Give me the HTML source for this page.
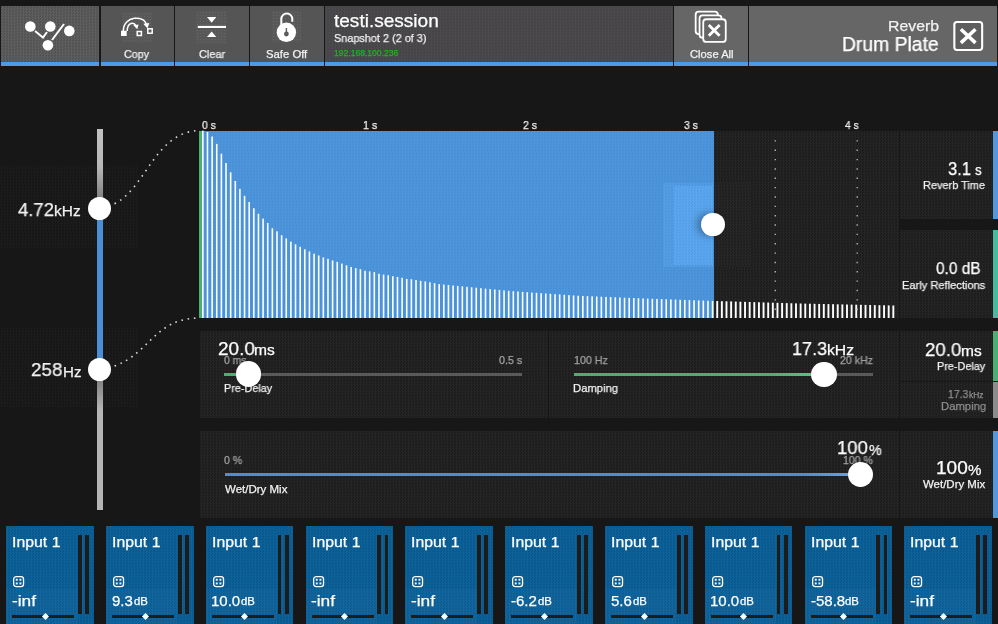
<!DOCTYPE html><html><head><meta charset="utf-8"><style>
html,body{margin:0;padding:0;width:998px;height:624px;overflow:hidden;background:#171717;}
body{position:relative;font-family:"Liberation Sans", sans-serif;}
.t{position:absolute;white-space:nowrap;line-height:1;transform-origin:0 0;will-change:transform;-webkit-text-stroke:0.25px currentColor;}
</style></head><body>
<div style="position:absolute;left:1.00px;top:6.00px;width:98.00px;height:56.00px;background:#585858;background-image:repeating-conic-gradient(#5e5e5e 0 25%,#525252 0 50%);background-size:3px 3px;"></div><div style="position:absolute;left:1.00px;top:62.00px;width:98.00px;height:4.00px;background:#4d9ae6;"></div><div style="position:absolute;left:100.50px;top:6.00px;width:73.00px;height:56.00px;background:#555555;"></div><div style="position:absolute;left:100.50px;top:62.00px;width:73.00px;height:4.00px;background:#4d9ae6;"></div><div style="position:absolute;left:175.00px;top:6.00px;width:73.70px;height:56.00px;background:#555555;"></div><div style="position:absolute;left:175.00px;top:62.00px;width:73.70px;height:4.00px;background:#4d9ae6;"></div><div style="position:absolute;left:250.20px;top:6.00px;width:73.60px;height:56.00px;background:#555555;"></div><div style="position:absolute;left:250.20px;top:62.00px;width:73.60px;height:4.00px;background:#4d9ae6;"></div><div style="position:absolute;left:325.00px;top:6.00px;width:348.00px;height:56.00px;background:#484848;background-image:repeating-conic-gradient(#4c4a4e 0 25%,#444444 0 50%);background-size:3px 3px;"></div><div style="position:absolute;left:325.00px;top:62.00px;width:348.00px;height:4.00px;background:#4d9ae6;"></div><div style="position:absolute;left:674.40px;top:6.00px;width:73.60px;height:56.00px;background:#666666;"></div><div style="position:absolute;left:674.40px;top:62.00px;width:73.60px;height:4.00px;background:#4d9ae6;"></div><div style="position:absolute;left:749.00px;top:6.00px;width:248.00px;height:56.00px;background:#666666;"></div><div style="position:absolute;left:749.00px;top:62.00px;width:248.00px;height:4.00px;background:#4d9ae6;"></div><div style="position:absolute;left:121.50px;top:12.20px;width:30.30px;height:30.40px;background:#585858;background-image:radial-gradient(circle,#666 0.6px,transparent 0.9px);background-size:3px 3px;"></div><div style="position:absolute;left:196.10px;top:10.60px;width:31.10px;height:32.70px;background:#585858;background-image:radial-gradient(circle,#666 0.6px,transparent 0.9px);background-size:3px 3px;"></div><div style="position:absolute;left:271.50px;top:11.20px;width:29.90px;height:31.20px;background:#585858;background-image:radial-gradient(circle,#666 0.6px,transparent 0.9px);background-size:3px 3px;"></div><div class="t" style="left:124.46px;top:49.02px;font-size:11.20px;color:#f2f2f2;transform:scaleX(0.9623)">Copy</div><div class="t" style="left:198.85px;top:49.02px;font-size:11.20px;color:#f2f2f2;transform:scaleX(0.9793)">Clear</div><div class="t" style="left:265.89px;top:49.02px;font-size:11.20px;color:#f2f2f2;transform:scaleX(1.0098)">Safe Off</div><div class="t" style="left:689.54px;top:49.12px;font-size:11.20px;color:#f2f2f2;transform:scaleX(1.0011)">Close All</div><div class="t" style="left:334.11px;top:11.65px;font-size:18.60px;color:#ffffff;transform:scaleX(1.0237)">testi.session</div><div class="t" style="left:333.51px;top:32.48px;font-size:11.60px;color:#f2f2f2;transform:scaleX(0.9380)">Snapshot 2 (2 of 3)</div><div class="t" style="left:333.96px;top:48.87px;font-size:8.30px;color:#1fb51f;transform:scaleX(1.0304)">192.168.100.236</div><div class="t" style="left:887.89px;top:18.10px;font-size:15.00px;color:#f2f2f2;transform:scaleX(1.0559)">Reverb</div><div class="t" style="left:841.91px;top:35.05px;font-size:19.90px;color:#ffffff;transform:scaleX(0.9710)">Drum Plate</div><svg style="position:absolute;left:0;top:0" width="998" height="70">
<g fill="#fff"><circle cx="30.3" cy="26.5" r="5.3"/><circle cx="50.3" cy="26.5" r="5.3"/><circle cx="69.3" cy="30.9" r="5.3"/><circle cx="47.9" cy="45.3" r="5.3"/></g>
<g stroke="#fff" stroke-width="2" fill="none"><polyline points="35,31 43,37.5 47,32"/><line x1="52" y1="40" x2="64" y2="24"/></g>
<g fill="#fff"><rect x="121" y="30.7" width="5.7" height="5.3"/></g>
<g stroke="#fff" stroke-width="1.5" fill="none"><rect x="137.2" y="31.5" width="4.2" height="4"/><rect x="147.8" y="28.8" width="4.4" height="4.4"/>
<path d="M123.3,31 C123.3,15.2 145,15.2 146.3,24.5"/><path d="M127.2,31 C127.2,21.8 134.8,21.8 135.9,26"/></g>
<g fill="#fff"><path d="M143.3,23.8 L149.3,23 L147.5,28.6 Z"/><path d="M133.3,25.3 L138.5,24.6 L137.3,29.2 Z"/></g>
<g fill="#fff"><path d="M207,17 L216.3,17 L211.65,22.8 Z"/><rect x="197.8" y="25.9" width="28.2" height="2.1"/><path d="M207,36.9 L216.3,36.9 L211.65,31.6 Z"/></g>
<g><circle cx="286.4" cy="32.3" r="9.7" fill="#fff"/><path d="M281.3,26 L281.3,19 A5.5,5.5 0 0 1 292.3,19 L292.3,21.7" stroke="#fff" stroke-width="2" fill="none"/>
<circle cx="286.4" cy="34" r="2.4" fill="#5b5b5b"/><rect x="285.7" y="28" width="1.4" height="5" fill="#5b5b5b"/></g>
<g fill="#666" stroke="#fff" stroke-width="1.8"><rect x="695.65" y="11.65" width="22.2" height="22.4" rx="3"/><rect x="699.55" y="15.45" width="22" height="22.2" rx="3"/><rect x="703.25" y="19.25" width="22.5" height="22.7" rx="3"/></g>
<g stroke="#fff" stroke-width="2.8"><line x1="708.8" y1="24.9" x2="719.6" y2="35.8"/><line x1="719.6" y1="24.9" x2="708.8" y2="35.8"/></g>
<rect x="954.35" y="21.95" width="27.8" height="28" rx="2.6" fill="#5e5e5e" stroke="#fff" stroke-width="2.1"/>
<g stroke="#fff" stroke-width="3.5"><line x1="960.9" y1="29.2" x2="975.5" y2="42.9"/><line x1="975.5" y1="29.2" x2="960.9" y2="42.9"/></g>
</svg><div style="position:absolute;left:0.00px;top:166.30px;width:138.50px;height:82.70px;background:#191919;background-image:repeating-conic-gradient(#1c1c1c 0 25%,#161616 0 50%);background-size:3px 3px;"></div><div style="position:absolute;left:0.00px;top:327.50px;width:138.50px;height:79.50px;background:#191919;background-image:repeating-conic-gradient(#1c1c1c 0 25%,#161616 0 50%);background-size:3px 3px;"></div><div style="position:absolute;left:97.00px;top:128.75px;width:6.00px;height:381.00px;background:linear-gradient(#c2c2c2 0px,#b8b8b8 38px,#7c7c7c 72px,#777 80px,#777 241px,#7e7e7e 250px,#b5b5b5 281px,#b5b5b5 381px);"></div><div style="position:absolute;left:97.00px;top:209.00px;width:6.00px;height:160.00px;background:#4a8fd6;"></div><svg style="position:absolute;left:0;top:100px" width="220" height="300">
<path d="M114.5,103.8 C146.2,88 155.1,31.6 199.5,30.5" stroke="#d8d8d8" stroke-width="1.6" stroke-dasharray="1.6 4.9" fill="none"/>
<path d="M114.5,266 C150.1,253.4 154.6,218.1 199.5,218" stroke="#d8d8d8" stroke-width="1.6" stroke-dasharray="1.6 4.7" fill="none"/>
</svg><div style="position:absolute;left:88.20px;top:197.00px;width:23.20px;height:23.20px;border-radius:50%;background:#fff;"></div><div style="position:absolute;left:88.20px;top:357.90px;width:23.20px;height:23.20px;border-radius:50%;background:#fff;"></div><div class="t" style="left:18.28px;top:199.91px;font-size:19.00px;color:#f0f0f0;transform:scaleX(0.9725)">4.72</div><div class="t" style="left:54.26px;top:203.30px;font-size:15.00px;color:#f0f0f0;transform:scaleX(1.0301)">kHz</div><div class="t" style="left:30.56px;top:360.21px;font-size:19.00px;color:#f0f0f0;transform:scaleX(0.9891)">258</div><div class="t" style="left:63.25px;top:363.60px;font-size:15.00px;color:#f0f0f0;transform:scaleX(1.0092)">Hz</div><div style="position:absolute;left:199.50px;top:130.50px;width:699.50px;height:187.50px;background:#212121;background-image:repeating-conic-gradient(#252525 0 25%,#1c1c1c 0 50%);background-size:3px 3px;"></div><div style="position:absolute;left:199.50px;top:130.50px;width:514.00px;height:187.50px;background:#4b91d9;background-image:repeating-conic-gradient(#4e95dc 0 25%,#4890d6 0 50%);background-size:3px 3px;"></div><div style="position:absolute;left:713.50px;top:183.20px;width:36.00px;height:84.00px;background:#232323;background-image:repeating-conic-gradient(#272727 0 25%,#1e1e1e 0 50%);background-size:3px 3px;"></div><div style="position:absolute;left:663.20px;top:183.20px;width:50.30px;height:84.00px;background:#519be2;background-image:repeating-conic-gradient(#549ee5 0 25%,#4e97df 0 50%);background-size:3px 3px;"></div><div style="position:absolute;left:673.80px;top:186.00px;width:39.70px;height:79.00px;background:#57a2ea;background-image:repeating-conic-gradient(#5ba6ee 0 25%,#539ee6 0 50%);background-size:3px 3px;"></div><div style="position:absolute;left:199.30px;top:130.50px;width:2.40px;height:187.50px;background:#4caf72;"></div><svg style="position:absolute;left:0;top:0" width="998" height="330"><rect x="202.05" y="130.60" width="1.6" height="187.40" fill="#fff"/><rect x="206.68" y="132.00" width="1.6" height="186.00" fill="#fff"/><rect x="211.32" y="136.53" width="1.6" height="181.47" fill="#fff"/><rect x="215.95" y="143.92" width="1.6" height="174.08" fill="#fff"/><rect x="220.59" y="153.67" width="1.6" height="164.33" fill="#fff"/><rect x="225.22" y="163.04" width="1.6" height="154.96" fill="#fff"/><rect x="229.85" y="172.31" width="1.6" height="145.69" fill="#fff"/><rect x="234.49" y="180.98" width="1.6" height="137.02" fill="#fff"/><rect x="239.12" y="188.87" width="1.6" height="129.13" fill="#fff"/><rect x="243.76" y="195.83" width="1.6" height="122.17" fill="#fff"/><rect x="248.39" y="201.99" width="1.6" height="116.01" fill="#fff"/><rect x="253.02" y="208.23" width="1.6" height="109.77" fill="#fff"/><rect x="257.66" y="213.75" width="1.6" height="104.25" fill="#fff"/><rect x="262.29" y="218.59" width="1.6" height="99.41" fill="#fff"/><rect x="266.93" y="223.03" width="1.6" height="94.97" fill="#fff"/><rect x="271.56" y="228.24" width="1.6" height="89.76" fill="#fff"/><rect x="276.19" y="231.30" width="1.6" height="86.70" fill="#fff"/><rect x="280.83" y="235.19" width="1.6" height="82.81" fill="#fff"/><rect x="285.46" y="238.38" width="1.6" height="79.62" fill="#fff"/><rect x="290.10" y="241.61" width="1.6" height="76.39" fill="#fff"/><rect x="294.73" y="244.23" width="1.6" height="73.77" fill="#fff"/><rect x="299.36" y="246.79" width="1.6" height="71.21" fill="#fff"/><rect x="304.00" y="249.33" width="1.6" height="68.67" fill="#fff"/><rect x="308.63" y="251.42" width="1.6" height="66.58" fill="#fff"/><rect x="313.27" y="253.70" width="1.6" height="64.30" fill="#fff"/><rect x="317.90" y="255.49" width="1.6" height="62.51" fill="#fff"/><rect x="322.53" y="257.49" width="1.6" height="60.51" fill="#fff"/><rect x="327.17" y="258.79" width="1.6" height="59.21" fill="#fff"/><rect x="331.80" y="260.46" width="1.6" height="57.54" fill="#fff"/><rect x="336.44" y="261.89" width="1.6" height="56.11" fill="#fff"/><rect x="341.07" y="263.60" width="1.6" height="54.40" fill="#fff"/><rect x="345.70" y="265.35" width="1.6" height="52.65" fill="#fff"/><rect x="350.34" y="267.01" width="1.6" height="50.99" fill="#fff"/><rect x="354.97" y="268.16" width="1.6" height="49.84" fill="#fff"/><rect x="359.61" y="269.21" width="1.6" height="48.79" fill="#fff"/><rect x="364.24" y="270.82" width="1.6" height="47.18" fill="#fff"/><rect x="368.87" y="271.41" width="1.6" height="46.59" fill="#fff"/><rect x="373.51" y="272.17" width="1.6" height="45.83" fill="#fff"/><rect x="378.14" y="273.73" width="1.6" height="44.27" fill="#fff"/><rect x="382.78" y="274.61" width="1.6" height="43.39" fill="#fff"/><rect x="387.41" y="275.13" width="1.6" height="42.87" fill="#fff"/><rect x="392.04" y="276.21" width="1.6" height="41.79" fill="#fff"/><rect x="396.68" y="276.98" width="1.6" height="41.02" fill="#fff"/><rect x="401.31" y="277.78" width="1.6" height="40.22" fill="#fff"/><rect x="405.95" y="278.99" width="1.6" height="39.01" fill="#fff"/><rect x="410.58" y="279.20" width="1.6" height="38.80" fill="#fff"/><rect x="415.21" y="279.99" width="1.6" height="38.01" fill="#fff"/><rect x="419.85" y="280.84" width="1.6" height="37.16" fill="#fff"/><rect x="424.48" y="281.45" width="1.6" height="36.55" fill="#fff"/><rect x="429.12" y="282.26" width="1.6" height="35.74" fill="#fff"/><rect x="433.75" y="283.17" width="1.6" height="34.83" fill="#fff"/><rect x="438.38" y="284.12" width="1.6" height="33.88" fill="#fff"/><rect x="443.02" y="284.57" width="1.6" height="33.43" fill="#fff"/><rect x="447.65" y="285.02" width="1.6" height="32.98" fill="#fff"/><rect x="452.29" y="285.47" width="1.6" height="32.53" fill="#fff"/><rect x="456.92" y="285.92" width="1.6" height="32.08" fill="#fff"/><rect x="461.55" y="286.37" width="1.6" height="31.63" fill="#fff"/><rect x="466.19" y="286.82" width="1.6" height="31.18" fill="#fff"/><rect x="470.82" y="287.27" width="1.6" height="30.73" fill="#fff"/><rect x="475.46" y="287.72" width="1.6" height="30.28" fill="#fff"/><rect x="480.09" y="288.17" width="1.6" height="29.83" fill="#fff"/><rect x="484.72" y="288.62" width="1.6" height="29.38" fill="#fff"/><rect x="489.36" y="289.07" width="1.6" height="28.93" fill="#fff"/><rect x="493.99" y="289.52" width="1.6" height="28.48" fill="#fff"/><rect x="498.63" y="289.97" width="1.6" height="28.03" fill="#fff"/><rect x="503.26" y="290.42" width="1.6" height="27.58" fill="#fff"/><rect x="507.89" y="290.87" width="1.6" height="27.13" fill="#fff"/><rect x="512.53" y="291.23" width="1.6" height="26.77" fill="#fff"/><rect x="517.16" y="291.55" width="1.6" height="26.45" fill="#fff"/><rect x="521.80" y="291.88" width="1.6" height="26.12" fill="#fff"/><rect x="526.43" y="292.20" width="1.6" height="25.80" fill="#fff"/><rect x="531.06" y="292.52" width="1.6" height="25.48" fill="#fff"/><rect x="535.70" y="292.84" width="1.6" height="25.16" fill="#fff"/><rect x="540.33" y="293.17" width="1.6" height="24.83" fill="#fff"/><rect x="544.97" y="293.49" width="1.6" height="24.51" fill="#fff"/><rect x="549.60" y="293.81" width="1.6" height="24.19" fill="#fff"/><rect x="554.23" y="294.13" width="1.6" height="23.87" fill="#fff"/><rect x="558.87" y="294.46" width="1.6" height="23.54" fill="#fff"/><rect x="563.50" y="294.78" width="1.6" height="23.22" fill="#fff"/><rect x="568.14" y="295.10" width="1.6" height="22.90" fill="#fff"/><rect x="572.77" y="295.42" width="1.6" height="22.58" fill="#fff"/><rect x="577.40" y="295.74" width="1.6" height="22.26" fill="#fff"/><rect x="582.04" y="295.96" width="1.6" height="22.04" fill="#fff"/><rect x="586.67" y="296.15" width="1.6" height="21.85" fill="#fff"/><rect x="591.31" y="296.34" width="1.6" height="21.66" fill="#fff"/><rect x="595.94" y="296.53" width="1.6" height="21.47" fill="#fff"/><rect x="600.57" y="296.72" width="1.6" height="21.28" fill="#fff"/><rect x="605.21" y="296.90" width="1.6" height="21.10" fill="#fff"/><rect x="609.84" y="297.09" width="1.6" height="20.91" fill="#fff"/><rect x="614.48" y="297.28" width="1.6" height="20.72" fill="#fff"/><rect x="619.11" y="297.47" width="1.6" height="20.53" fill="#fff"/><rect x="623.74" y="297.66" width="1.6" height="20.34" fill="#fff"/><rect x="628.38" y="297.85" width="1.6" height="20.15" fill="#fff"/><rect x="633.01" y="298.04" width="1.6" height="19.96" fill="#fff"/><rect x="637.65" y="298.23" width="1.6" height="19.77" fill="#fff"/><rect x="642.28" y="298.42" width="1.6" height="19.58" fill="#fff"/><rect x="646.91" y="298.60" width="1.6" height="19.40" fill="#fff"/><rect x="651.55" y="298.76" width="1.6" height="19.24" fill="#fff"/><rect x="656.18" y="298.93" width="1.6" height="19.07" fill="#fff"/><rect x="660.82" y="299.09" width="1.6" height="18.91" fill="#fff"/><rect x="665.45" y="299.26" width="1.6" height="18.74" fill="#fff"/><rect x="670.08" y="299.42" width="1.6" height="18.58" fill="#fff"/><rect x="674.72" y="299.59" width="1.6" height="18.41" fill="#fff"/><rect x="679.35" y="299.75" width="1.6" height="18.25" fill="#fff"/><rect x="683.99" y="299.91" width="1.6" height="18.09" fill="#fff"/><rect x="688.62" y="300.08" width="1.6" height="17.92" fill="#fff"/><rect x="693.25" y="300.24" width="1.6" height="17.76" fill="#fff"/><rect x="697.89" y="300.41" width="1.6" height="17.59" fill="#fff"/><rect x="702.52" y="300.57" width="1.6" height="17.43" fill="#fff"/><rect x="707.16" y="300.74" width="1.6" height="17.26" fill="#fff"/><rect x="711.79" y="300.90" width="1.6" height="17.10" fill="#fff"/><rect x="716.27" y="301.04" width="1.9" height="16.96" fill="#fff"/><rect x="720.91" y="301.18" width="1.9" height="16.82" fill="#fff"/><rect x="725.54" y="301.32" width="1.9" height="16.68" fill="#fff"/><rect x="730.18" y="301.45" width="1.9" height="16.55" fill="#fff"/><rect x="734.81" y="301.59" width="1.9" height="16.41" fill="#fff"/><rect x="739.44" y="301.73" width="1.9" height="16.27" fill="#fff"/><rect x="744.08" y="301.87" width="1.9" height="16.13" fill="#fff"/><rect x="748.71" y="302.00" width="1.9" height="16.00" fill="#fff"/><rect x="753.35" y="302.14" width="1.9" height="15.86" fill="#fff"/><rect x="757.98" y="302.28" width="1.9" height="15.72" fill="#fff"/><rect x="762.61" y="302.42" width="1.9" height="15.58" fill="#fff"/><rect x="767.25" y="302.56" width="1.9" height="15.44" fill="#fff"/><rect x="771.88" y="302.69" width="1.9" height="15.31" fill="#fff"/><rect x="776.52" y="302.83" width="1.9" height="15.17" fill="#fff"/><rect x="781.15" y="302.97" width="1.9" height="15.03" fill="#fff"/><rect x="785.78" y="303.11" width="1.9" height="14.89" fill="#fff"/><rect x="790.42" y="303.24" width="1.9" height="14.76" fill="#fff"/><rect x="795.05" y="303.38" width="1.9" height="14.62" fill="#fff"/><rect x="799.69" y="303.51" width="1.9" height="14.49" fill="#fff"/><rect x="804.32" y="303.61" width="1.9" height="14.39" fill="#fff"/><rect x="808.95" y="303.71" width="1.9" height="14.29" fill="#fff"/><rect x="813.59" y="303.81" width="1.9" height="14.19" fill="#fff"/><rect x="818.22" y="303.91" width="1.9" height="14.09" fill="#fff"/><rect x="822.86" y="304.01" width="1.9" height="13.99" fill="#fff"/><rect x="827.49" y="304.11" width="1.9" height="13.89" fill="#fff"/><rect x="832.12" y="304.21" width="1.9" height="13.79" fill="#fff"/><rect x="836.76" y="304.31" width="1.9" height="13.69" fill="#fff"/><rect x="841.39" y="304.41" width="1.9" height="13.59" fill="#fff"/><rect x="846.03" y="304.51" width="1.9" height="13.49" fill="#fff"/><rect x="850.66" y="304.61" width="1.9" height="13.39" fill="#fff"/><rect x="855.29" y="304.70" width="1.9" height="13.30" fill="#fff"/><rect x="859.93" y="304.80" width="1.9" height="13.20" fill="#fff"/><rect x="864.56" y="304.90" width="1.9" height="13.10" fill="#fff"/><rect x="869.20" y="305.00" width="1.9" height="13.00" fill="#fff"/><rect x="873.83" y="305.10" width="1.9" height="12.90" fill="#fff"/><rect x="878.46" y="305.20" width="1.9" height="12.80" fill="#fff"/><rect x="883.10" y="305.30" width="1.9" height="12.70" fill="#fff"/><rect x="887.73" y="305.40" width="1.9" height="12.60" fill="#fff"/><rect x="892.37" y="305.50" width="1.9" height="12.50" fill="#fff"/><line x1="775.3" y1="140.2" x2="775.3" y2="318" stroke="#b0b0b0" stroke-width="1.4" stroke-dasharray="1.4 7.95"/><line x1="857.2" y1="140.2" x2="857.2" y2="318" stroke="#b0b0b0" stroke-width="1.4" stroke-dasharray="1.4 7.95"/></svg><div style="position:absolute;left:701.10px;top:212.80px;width:23.60px;height:23.60px;border-radius:50%;background:#fff;box-shadow:-4px 0 7px rgba(0,0,0,0.3)"></div><div class="t" style="left:202.38px;top:119.56px;font-size:11.50px;color:#f0f0f0;transform:scaleX(0.9110)">0 s</div><div class="t" style="left:362.54px;top:119.56px;font-size:11.50px;color:#f0f0f0;transform:scaleX(0.9370)">1 s</div><div class="t" style="left:523.37px;top:119.56px;font-size:11.50px;color:#f0f0f0;transform:scaleX(0.9183)">2 s</div><div class="t" style="left:684.06px;top:119.56px;font-size:11.50px;color:#f0f0f0;transform:scaleX(0.9092)">3 s</div><div class="t" style="left:844.77px;top:119.56px;font-size:11.50px;color:#f0f0f0;transform:scaleX(0.8985)">4 s</div><div style="position:absolute;left:900.00px;top:130.90px;width:93.00px;height:87.80px;background:#212121;background-image:repeating-conic-gradient(#252525 0 25%,#1c1c1c 0 50%);background-size:3px 3px;"></div><div style="position:absolute;left:993.00px;top:130.90px;width:5.00px;height:87.80px;background:#5398dc;"></div><div style="position:absolute;left:900.00px;top:230.30px;width:93.00px;height:87.30px;background:#212121;background-image:repeating-conic-gradient(#252525 0 25%,#1c1c1c 0 50%);background-size:3px 3px;"></div><div style="position:absolute;left:993.00px;top:230.30px;width:5.00px;height:87.30px;background:#4db8a0;"></div><div style="position:absolute;left:900.00px;top:330.70px;width:93.00px;height:50.30px;background:#212121;background-image:repeating-conic-gradient(#252525 0 25%,#1c1c1c 0 50%);background-size:3px 3px;"></div><div style="position:absolute;left:993.00px;top:330.70px;width:5.00px;height:50.30px;background:#4caf72;"></div><div style="position:absolute;left:900.00px;top:382.30px;width:93.00px;height:35.50px;background:#212121;background-image:repeating-conic-gradient(#252525 0 25%,#1c1c1c 0 50%);background-size:3px 3px;"></div><div style="position:absolute;left:993.00px;top:382.30px;width:5.00px;height:35.50px;background:#8c8c8c;"></div><div style="position:absolute;left:900.00px;top:431.00px;width:93.00px;height:86.60px;background:#212121;background-image:repeating-conic-gradient(#252525 0 25%,#1c1c1c 0 50%);background-size:3px 3px;"></div><div style="position:absolute;left:993.00px;top:431.00px;width:5.00px;height:86.60px;background:#5398dc;"></div><div class="t" style="left:948.28px;top:158.91px;font-size:19.00px;color:#ffffff;transform:scaleX(0.8711)">3.1</div><div class="t" style="left:974.73px;top:161.88px;font-size:15.50px;color:#ffffff;transform:scaleX(0.8700)">s</div><div class="t" style="left:923.30px;top:180.03px;font-size:11.30px;color:#f2f2f2;transform:scaleX(0.9692)">Reverb Time</div><div class="t" style="left:936.08px;top:261.28px;font-size:16.80px;color:#ffffff;transform:scaleX(0.9205)">0.0 dB</div><div class="t" style="left:902.18px;top:279.93px;font-size:11.30px;color:#f2f2f2;transform:scaleX(0.9826)">Early Reflections</div><div class="t" style="left:924.97px;top:339.71px;font-size:19.00px;color:#ffffff;transform:scaleX(0.9804)">20.0</div><div class="t" style="left:961.17px;top:342.68px;font-size:15.50px;color:#ffffff;transform:scaleX(0.9861)">ms</div><div class="t" style="left:937.20px;top:361.43px;font-size:11.30px;color:#f2f2f2;transform:scaleX(0.9621)">Pre-Delay</div><div class="t" style="left:947.82px;top:388.82px;font-size:10.60px;color:#8e8e8e;transform:scaleX(0.9808)">17.3</div><div class="t" style="left:968.93px;top:390.77px;font-size:8.30px;color:#8e8e8e;transform:scaleX(1.0134)">kHz</div><div class="t" style="left:940.97px;top:401.33px;font-size:11.30px;color:#8e8e8e;transform:scaleX(0.9963)">Damping</div><div class="t" style="left:936.19px;top:458.11px;font-size:19.00px;color:#ffffff;transform:scaleX(0.9917)">100</div><div class="t" style="left:968.27px;top:461.80px;font-size:15.00px;color:#ffffff;transform:scaleX(1.0081)">%</div><div class="t" style="left:923.24px;top:479.23px;font-size:11.30px;color:#f2f2f2;transform:scaleX(1.0147)">Wet/Dry Mix</div><div style="position:absolute;left:199.70px;top:331.00px;width:699.30px;height:86.60px;background:#212121;background-image:repeating-conic-gradient(#252525 0 25%,#1c1c1c 0 50%);background-size:3px 3px;"></div><div style="position:absolute;left:548.00px;top:331.00px;width:1.20px;height:86.60px;background:#151515;"></div><div style="position:absolute;left:224.40px;top:373.00px;width:297.90px;height:3.00px;background:#5a5a5a;"></div><div style="position:absolute;left:224.40px;top:373.00px;width:24.00px;height:3.00px;background:#4caf72;"></div><div class="t" style="left:224.39px;top:355.16px;font-size:10.80px;color:#a2a2a2;transform:scaleX(0.9602)">0 ms</div><div class="t" style="left:499.47px;top:355.06px;font-size:10.80px;color:#a2a2a2;transform:scaleX(0.9912)">0.5 s</div><div class="t" style="left:223.80px;top:383.43px;font-size:11.30px;color:#f2f2f2;transform:scaleX(0.9601)">Pre-Delay</div><div style="position:absolute;left:235.50px;top:361.40px;width:25.40px;height:25.40px;border-radius:50%;background:#fff;"></div><div class="t" style="left:217.86px;top:338.81px;font-size:19.00px;color:#ffffff;transform:scaleX(0.9945)">20.0</div><div class="t" style="left:253.85px;top:341.78px;font-size:15.50px;color:#ffffff;transform:scaleX(1.0071)">ms</div><div style="position:absolute;left:573.90px;top:373.00px;width:298.90px;height:3.00px;background:#5a5a5a;"></div><div style="position:absolute;left:573.90px;top:373.00px;width:250.00px;height:3.00px;background:linear-gradient(90deg,#4caf72 0px,#4caf72 195px,#5cc486 245px);"></div><div class="t" style="left:573.80px;top:355.16px;font-size:10.80px;color:#a2a2a2;transform:scaleX(0.9891)">100 Hz</div><div class="t" style="left:840.17px;top:355.06px;font-size:10.80px;color:#a2a2a2;transform:scaleX(0.9805)">20 kHz</div><div class="t" style="left:573.47px;top:383.23px;font-size:11.30px;color:#f2f2f2;transform:scaleX(0.9940)">Damping</div><div style="position:absolute;left:811.20px;top:361.70px;width:25.40px;height:25.40px;border-radius:50%;background:#fff;"></div><div class="t" style="left:791.75px;top:338.91px;font-size:19.00px;color:#ffffff;transform:scaleX(0.9475)">17.3</div><div class="t" style="left:826.84px;top:342.40px;font-size:15.00px;color:#ffffff;transform:scaleX(1.0467)">kHz</div><div style="position:absolute;left:199.60px;top:431.00px;width:699.40px;height:86.60px;background:#212121;background-image:repeating-conic-gradient(#252525 0 25%,#1c1c1c 0 50%);background-size:3px 3px;"></div><div style="position:absolute;left:224.70px;top:473.00px;width:635.30px;height:3.00px;background:linear-gradient(90deg,#4a8fd6 0px,#4a8fd6 580px,#5ea7f0 630px);"></div><div class="t" style="left:224.28px;top:455.16px;font-size:10.80px;color:#a2a2a2;transform:scaleX(0.9764)">0 %</div><div class="t" style="left:843.41px;top:454.76px;font-size:10.80px;color:#a2a2a2;transform:scaleX(0.9743)">100 %</div><div class="t" style="left:224.64px;top:483.73px;font-size:11.30px;color:#f2f2f2;transform:scaleX(1.0179)">Wet/Dry Mix</div><div style="position:absolute;left:847.80px;top:461.50px;width:25.40px;height:25.40px;border-radius:50%;background:#fff;"></div><div class="t" style="left:836.62px;top:438.41px;font-size:19.00px;color:#ffffff;transform:scaleX(0.9714)">100</div><div class="t" style="left:868.80px;top:442.10px;font-size:15.00px;color:#ffffff;transform:scaleX(0.9512)">%</div><div style="position:absolute;left:6.10px;top:525.70px;width:87.70px;height:99.00px;background:#0b5c92;background-image:repeating-conic-gradient(#0c6397 0 25%,#0a568e 0 50%);background-size:3px 3px;"></div><div style="position:absolute;left:6.10px;top:589.00px;width:71.50px;height:35.00px;background:rgba(120,200,255,0.05);"></div><div style="position:absolute;left:78.00px;top:535.20px;width:3.90px;height:79.00px;background:#1c1c1c;"></div><div style="position:absolute;left:85.20px;top:535.20px;width:3.90px;height:79.00px;background:#1c1c1c;"></div><div style="position:absolute;left:12.20px;top:614.60px;width:62.10px;height:3.10px;background:#1c1c1c;"></div><div style="position:absolute;left:42.70px;top:613.60px;width:5px;height:5px;background:#fff;transform:rotate(45deg)"></div><div class="t" style="left:12.23px;top:534.33px;font-size:15.20px;color:#ffffff;transform:scaleX(1.0441)">Input 1</div><svg style="position:absolute;left:13.10px;top:576.0px" width="12" height="12"><rect x="0.65" y="0.65" width="9.9" height="9.9" rx="2.6" fill="none" stroke="#fff" stroke-width="1.3"/><g fill="#fff"><rect x="2.8" y="2.8" width="1.9" height="1.9"/><rect x="6.5" y="2.8" width="1.9" height="1.9"/><rect x="2.8" y="6.5" width="1.9" height="1.9"/><rect x="6.5" y="6.5" width="1.9" height="1.9"/></g></svg><div class="t" style="left:11.72px;top:592.50px;font-size:15.00px;color:#ffffff;transform:scaleX(1.1528)">-inf</div><div style="position:absolute;left:105.90px;top:525.70px;width:87.70px;height:99.00px;background:#0b5c92;background-image:repeating-conic-gradient(#0c6397 0 25%,#0a568e 0 50%);background-size:3px 3px;"></div><div style="position:absolute;left:105.90px;top:589.00px;width:71.50px;height:35.00px;background:rgba(120,200,255,0.05);"></div><div style="position:absolute;left:177.80px;top:535.20px;width:3.90px;height:79.00px;background:#1c1c1c;"></div><div style="position:absolute;left:185.00px;top:535.20px;width:3.90px;height:79.00px;background:#1c1c1c;"></div><div style="position:absolute;left:112.00px;top:614.60px;width:62.10px;height:3.10px;background:#1c1c1c;"></div><div style="position:absolute;left:142.50px;top:613.60px;width:5px;height:5px;background:#fff;transform:rotate(45deg)"></div><div class="t" style="left:112.03px;top:534.33px;font-size:15.20px;color:#ffffff;transform:scaleX(1.0441)">Input 1</div><svg style="position:absolute;left:112.90px;top:576.0px" width="12" height="12"><rect x="0.65" y="0.65" width="9.9" height="9.9" rx="2.6" fill="none" stroke="#fff" stroke-width="1.3"/><g fill="#fff"><rect x="2.8" y="2.8" width="1.9" height="1.9"/><rect x="6.5" y="2.8" width="1.9" height="1.9"/><rect x="2.8" y="6.5" width="1.9" height="1.9"/><rect x="6.5" y="6.5" width="1.9" height="1.9"/></g></svg><div class="t" style="left:111.89px;top:592.50px;font-size:15.00px;color:#ffffff;transform:scaleX(1.0000)">9.3</div><div class="t" style="left:133.52px;top:596.68px;font-size:10.30px;color:#ffffff;transform:scaleX(1.1022)">dB</div><div style="position:absolute;left:205.70px;top:525.70px;width:87.70px;height:99.00px;background:#0b5c92;background-image:repeating-conic-gradient(#0c6397 0 25%,#0a568e 0 50%);background-size:3px 3px;"></div><div style="position:absolute;left:205.70px;top:589.00px;width:71.50px;height:35.00px;background:rgba(120,200,255,0.05);"></div><div style="position:absolute;left:277.60px;top:535.20px;width:3.90px;height:79.00px;background:#1c1c1c;"></div><div style="position:absolute;left:284.80px;top:535.20px;width:3.90px;height:79.00px;background:#1c1c1c;"></div><div style="position:absolute;left:211.80px;top:614.60px;width:62.10px;height:3.10px;background:#1c1c1c;"></div><div style="position:absolute;left:242.30px;top:613.60px;width:5px;height:5px;background:#fff;transform:rotate(45deg)"></div><div class="t" style="left:211.83px;top:534.33px;font-size:15.20px;color:#ffffff;transform:scaleX(1.0441)">Input 1</div><svg style="position:absolute;left:212.70px;top:576.0px" width="12" height="12"><rect x="0.65" y="0.65" width="9.9" height="9.9" rx="2.6" fill="none" stroke="#fff" stroke-width="1.3"/><g fill="#fff"><rect x="2.8" y="2.8" width="1.9" height="1.9"/><rect x="6.5" y="2.8" width="1.9" height="1.9"/><rect x="2.8" y="6.5" width="1.9" height="1.9"/><rect x="6.5" y="6.5" width="1.9" height="1.9"/></g></svg><div class="t" style="left:211.27px;top:592.50px;font-size:15.00px;color:#ffffff;transform:scaleX(1.0000)">10.0</div><div class="t" style="left:241.31px;top:596.68px;font-size:10.30px;color:#ffffff;transform:scaleX(1.1022)">dB</div><div style="position:absolute;left:305.50px;top:525.70px;width:87.70px;height:99.00px;background:#0b5c92;background-image:repeating-conic-gradient(#0c6397 0 25%,#0a568e 0 50%);background-size:3px 3px;"></div><div style="position:absolute;left:305.50px;top:589.00px;width:71.50px;height:35.00px;background:rgba(120,200,255,0.05);"></div><div style="position:absolute;left:377.40px;top:535.20px;width:3.90px;height:79.00px;background:#1c1c1c;"></div><div style="position:absolute;left:384.60px;top:535.20px;width:3.90px;height:79.00px;background:#1c1c1c;"></div><div style="position:absolute;left:311.60px;top:614.60px;width:62.10px;height:3.10px;background:#1c1c1c;"></div><div style="position:absolute;left:342.10px;top:613.60px;width:5px;height:5px;background:#fff;transform:rotate(45deg)"></div><div class="t" style="left:311.63px;top:534.33px;font-size:15.20px;color:#ffffff;transform:scaleX(1.0441)">Input 1</div><svg style="position:absolute;left:312.50px;top:576.0px" width="12" height="12"><rect x="0.65" y="0.65" width="9.9" height="9.9" rx="2.6" fill="none" stroke="#fff" stroke-width="1.3"/><g fill="#fff"><rect x="2.8" y="2.8" width="1.9" height="1.9"/><rect x="6.5" y="2.8" width="1.9" height="1.9"/><rect x="2.8" y="6.5" width="1.9" height="1.9"/><rect x="6.5" y="6.5" width="1.9" height="1.9"/></g></svg><div class="t" style="left:311.12px;top:592.50px;font-size:15.00px;color:#ffffff;transform:scaleX(1.1528)">-inf</div><div style="position:absolute;left:405.30px;top:525.70px;width:87.70px;height:99.00px;background:#0b5c92;background-image:repeating-conic-gradient(#0c6397 0 25%,#0a568e 0 50%);background-size:3px 3px;"></div><div style="position:absolute;left:405.30px;top:589.00px;width:71.50px;height:35.00px;background:rgba(120,200,255,0.05);"></div><div style="position:absolute;left:477.20px;top:535.20px;width:3.90px;height:79.00px;background:#1c1c1c;"></div><div style="position:absolute;left:484.40px;top:535.20px;width:3.90px;height:79.00px;background:#1c1c1c;"></div><div style="position:absolute;left:411.40px;top:614.60px;width:62.10px;height:3.10px;background:#1c1c1c;"></div><div style="position:absolute;left:441.90px;top:613.60px;width:5px;height:5px;background:#fff;transform:rotate(45deg)"></div><div class="t" style="left:411.43px;top:534.33px;font-size:15.20px;color:#ffffff;transform:scaleX(1.0441)">Input 1</div><svg style="position:absolute;left:412.30px;top:576.0px" width="12" height="12"><rect x="0.65" y="0.65" width="9.9" height="9.9" rx="2.6" fill="none" stroke="#fff" stroke-width="1.3"/><g fill="#fff"><rect x="2.8" y="2.8" width="1.9" height="1.9"/><rect x="6.5" y="2.8" width="1.9" height="1.9"/><rect x="2.8" y="6.5" width="1.9" height="1.9"/><rect x="6.5" y="6.5" width="1.9" height="1.9"/></g></svg><div class="t" style="left:410.92px;top:592.50px;font-size:15.00px;color:#ffffff;transform:scaleX(1.1528)">-inf</div><div style="position:absolute;left:505.10px;top:525.70px;width:87.70px;height:99.00px;background:#0b5c92;background-image:repeating-conic-gradient(#0c6397 0 25%,#0a568e 0 50%);background-size:3px 3px;"></div><div style="position:absolute;left:505.10px;top:589.00px;width:71.50px;height:35.00px;background:rgba(120,200,255,0.05);"></div><div style="position:absolute;left:577.00px;top:535.20px;width:3.90px;height:79.00px;background:#1c1c1c;"></div><div style="position:absolute;left:584.20px;top:535.20px;width:3.90px;height:79.00px;background:#1c1c1c;"></div><div style="position:absolute;left:511.20px;top:614.60px;width:62.10px;height:3.10px;background:#1c1c1c;"></div><div style="position:absolute;left:541.70px;top:613.60px;width:5px;height:5px;background:#fff;transform:rotate(45deg)"></div><div class="t" style="left:511.23px;top:534.33px;font-size:15.20px;color:#ffffff;transform:scaleX(1.0441)">Input 1</div><svg style="position:absolute;left:512.10px;top:576.0px" width="12" height="12"><rect x="0.65" y="0.65" width="9.9" height="9.9" rx="2.6" fill="none" stroke="#fff" stroke-width="1.3"/><g fill="#fff"><rect x="2.8" y="2.8" width="1.9" height="1.9"/><rect x="6.5" y="2.8" width="1.9" height="1.9"/><rect x="2.8" y="6.5" width="1.9" height="1.9"/><rect x="6.5" y="6.5" width="1.9" height="1.9"/></g></svg><div class="t" style="left:511.12px;top:592.50px;font-size:15.00px;color:#ffffff;transform:scaleX(1.0000)">-6.2</div><div class="t" style="left:537.63px;top:596.68px;font-size:10.30px;color:#ffffff;transform:scaleX(1.1022)">dB</div><div style="position:absolute;left:604.90px;top:525.70px;width:87.70px;height:99.00px;background:#0b5c92;background-image:repeating-conic-gradient(#0c6397 0 25%,#0a568e 0 50%);background-size:3px 3px;"></div><div style="position:absolute;left:604.90px;top:589.00px;width:71.50px;height:35.00px;background:rgba(120,200,255,0.05);"></div><div style="position:absolute;left:676.80px;top:535.20px;width:3.90px;height:79.00px;background:#1c1c1c;"></div><div style="position:absolute;left:684.00px;top:535.20px;width:3.90px;height:79.00px;background:#1c1c1c;"></div><div style="position:absolute;left:611.00px;top:614.60px;width:62.10px;height:3.10px;background:#1c1c1c;"></div><div style="position:absolute;left:641.50px;top:613.60px;width:5px;height:5px;background:#fff;transform:rotate(45deg)"></div><div class="t" style="left:611.03px;top:534.33px;font-size:15.20px;color:#ffffff;transform:scaleX(1.0441)">Input 1</div><svg style="position:absolute;left:611.90px;top:576.0px" width="12" height="12"><rect x="0.65" y="0.65" width="9.9" height="9.9" rx="2.6" fill="none" stroke="#fff" stroke-width="1.3"/><g fill="#fff"><rect x="2.8" y="2.8" width="1.9" height="1.9"/><rect x="6.5" y="2.8" width="1.9" height="1.9"/><rect x="2.8" y="6.5" width="1.9" height="1.9"/><rect x="6.5" y="6.5" width="1.9" height="1.9"/></g></svg><div class="t" style="left:611.00px;top:592.50px;font-size:15.00px;color:#ffffff;transform:scaleX(1.0000)">5.6</div><div class="t" style="left:632.63px;top:596.68px;font-size:10.30px;color:#ffffff;transform:scaleX(1.1022)">dB</div><div style="position:absolute;left:704.70px;top:525.70px;width:87.70px;height:99.00px;background:#0b5c92;background-image:repeating-conic-gradient(#0c6397 0 25%,#0a568e 0 50%);background-size:3px 3px;"></div><div style="position:absolute;left:704.70px;top:589.00px;width:71.50px;height:35.00px;background:rgba(120,200,255,0.05);"></div><div style="position:absolute;left:776.60px;top:535.20px;width:3.90px;height:79.00px;background:#1c1c1c;"></div><div style="position:absolute;left:783.80px;top:535.20px;width:3.90px;height:79.00px;background:#1c1c1c;"></div><div style="position:absolute;left:710.80px;top:614.60px;width:62.10px;height:3.10px;background:#1c1c1c;"></div><div style="position:absolute;left:741.30px;top:613.60px;width:5px;height:5px;background:#fff;transform:rotate(45deg)"></div><div class="t" style="left:710.83px;top:534.33px;font-size:15.20px;color:#ffffff;transform:scaleX(1.0441)">Input 1</div><svg style="position:absolute;left:711.70px;top:576.0px" width="12" height="12"><rect x="0.65" y="0.65" width="9.9" height="9.9" rx="2.6" fill="none" stroke="#fff" stroke-width="1.3"/><g fill="#fff"><rect x="2.8" y="2.8" width="1.9" height="1.9"/><rect x="6.5" y="2.8" width="1.9" height="1.9"/><rect x="2.8" y="6.5" width="1.9" height="1.9"/><rect x="6.5" y="6.5" width="1.9" height="1.9"/></g></svg><div class="t" style="left:710.28px;top:592.50px;font-size:15.00px;color:#ffffff;transform:scaleX(1.0000)">10.0</div><div class="t" style="left:740.31px;top:596.68px;font-size:10.30px;color:#ffffff;transform:scaleX(1.1022)">dB</div><div style="position:absolute;left:804.50px;top:525.70px;width:87.70px;height:99.00px;background:#0b5c92;background-image:repeating-conic-gradient(#0c6397 0 25%,#0a568e 0 50%);background-size:3px 3px;"></div><div style="position:absolute;left:804.50px;top:589.00px;width:71.50px;height:35.00px;background:rgba(120,200,255,0.05);"></div><div style="position:absolute;left:876.40px;top:535.20px;width:3.90px;height:79.00px;background:#1c1c1c;"></div><div style="position:absolute;left:883.60px;top:535.20px;width:3.90px;height:79.00px;background:#1c1c1c;"></div><div style="position:absolute;left:810.60px;top:614.60px;width:62.10px;height:3.10px;background:#1c1c1c;"></div><div style="position:absolute;left:841.10px;top:613.60px;width:5px;height:5px;background:#fff;transform:rotate(45deg)"></div><div class="t" style="left:810.63px;top:534.33px;font-size:15.20px;color:#ffffff;transform:scaleX(1.0441)">Input 1</div><svg style="position:absolute;left:811.50px;top:576.0px" width="12" height="12"><rect x="0.65" y="0.65" width="9.9" height="9.9" rx="2.6" fill="none" stroke="#fff" stroke-width="1.3"/><g fill="#fff"><rect x="2.8" y="2.8" width="1.9" height="1.9"/><rect x="6.5" y="2.8" width="1.9" height="1.9"/><rect x="2.8" y="6.5" width="1.9" height="1.9"/><rect x="6.5" y="6.5" width="1.9" height="1.9"/></g></svg><div class="t" style="left:810.53px;top:592.50px;font-size:15.00px;color:#ffffff;transform:scaleX(1.0000)">-58.8</div><div class="t" style="left:845.47px;top:596.68px;font-size:10.30px;color:#ffffff;transform:scaleX(1.1022)">dB</div><div style="position:absolute;left:904.30px;top:525.70px;width:87.70px;height:99.00px;background:#0b5c92;background-image:repeating-conic-gradient(#0c6397 0 25%,#0a568e 0 50%);background-size:3px 3px;"></div><div style="position:absolute;left:904.30px;top:589.00px;width:71.50px;height:35.00px;background:rgba(120,200,255,0.05);"></div><div style="position:absolute;left:976.20px;top:535.20px;width:3.90px;height:79.00px;background:#1c1c1c;"></div><div style="position:absolute;left:983.40px;top:535.20px;width:3.90px;height:79.00px;background:#1c1c1c;"></div><div style="position:absolute;left:910.40px;top:614.60px;width:62.10px;height:3.10px;background:#1c1c1c;"></div><div style="position:absolute;left:940.90px;top:613.60px;width:5px;height:5px;background:#fff;transform:rotate(45deg)"></div><div class="t" style="left:910.43px;top:534.33px;font-size:15.20px;color:#ffffff;transform:scaleX(1.0441)">Input 1</div><svg style="position:absolute;left:911.30px;top:576.0px" width="12" height="12"><rect x="0.65" y="0.65" width="9.9" height="9.9" rx="2.6" fill="none" stroke="#fff" stroke-width="1.3"/><g fill="#fff"><rect x="2.8" y="2.8" width="1.9" height="1.9"/><rect x="6.5" y="2.8" width="1.9" height="1.9"/><rect x="2.8" y="6.5" width="1.9" height="1.9"/><rect x="6.5" y="6.5" width="1.9" height="1.9"/></g></svg><div class="t" style="left:909.92px;top:592.50px;font-size:15.00px;color:#ffffff;transform:scaleX(1.1528)">-inf</div>
</body></html>
